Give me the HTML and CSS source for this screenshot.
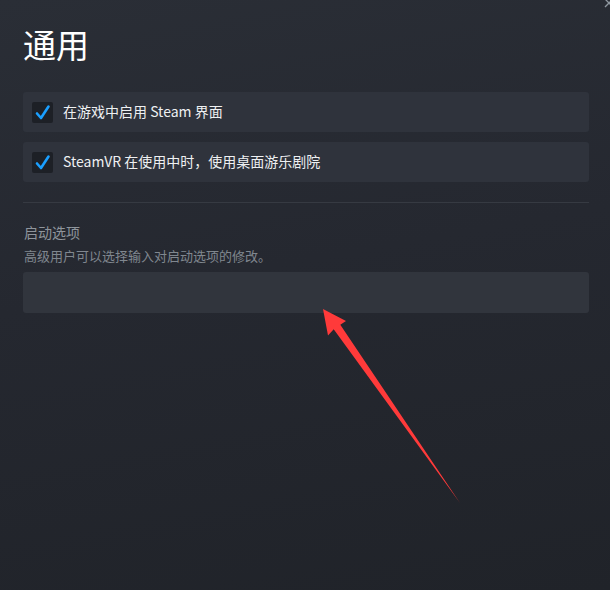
FILE: index.html
```html
<!DOCTYPE html>
<html lang="zh-CN">
<head>
<meta charset="utf-8">
<title>通用</title>
<link rel="stylesheet" href="styles.css">
</head>
<body>
<div class="page">
  <h1 class="title">通用</h1>
  <div class="row">
    <span class="check"><svg width="21" height="21" viewBox="0 0 21 21"><path d="M5 11.5 L9 16 L16.5 4.5" fill="none" stroke="#1a9fff" stroke-width="2.6" stroke-linecap="round" stroke-linejoin="round"/></svg></span>
    <span class="label">在游戏中启用 Steam 界面</span>
  </div>
  <div class="row">
    <span class="check"><svg width="21" height="21" viewBox="0 0 21 21"><path d="M5 11.5 L9 16 L16.5 4.5" fill="none" stroke="#1a9fff" stroke-width="2.6" stroke-linecap="round" stroke-linejoin="round"/></svg></span>
    <span class="label">SteamVR 在使用中时，使用桌面游乐剧院</span>
  </div>
  <div class="divider"></div>
  <div class="section-title">启动选项</div>
  <div class="section-desc">高级用户可以选择输入对启动选项的修改。</div>
  <div class="input"></div>
</div>
<svg class="close" width="10" height="10" viewBox="0 0 10 10"><path d="M1 1 L9 9 M9 1 L1 9" stroke="#8f98a0" stroke-width="1.3"/></svg>
<svg class="arrow" width="610" height="590" viewBox="0 0 610 590"><polygon points="323,309 346,321 340.3,324.7 460,503 333.7,329.3 328,335.5" fill="#ff3a3a"/></svg>
</body>
</html>
```
FILE: styles.css
```css
html, body {
  margin: 0;
  padding: 0;
}
body {
  width: 610px;
  height: 590px;
  overflow: hidden;
  background: linear-gradient(170deg, #2a2e36 0%, #252830 45%, #202329 100%);
  font-family: "Noto Sans CJK SC", "Noto Sans", sans-serif;
  position: relative;
}
.page {
  padding: 24px 21px 0 23px;
  display: flex;
  flex-direction: column;
}
.title {
  margin: 0;
  font-size: 33px;
  line-height: 40px;
  font-weight: 400;
  color: #ffffff;
  margin-left: 0;
}
.row {
  margin-top: 28px;
  height: 40px;
  background: #2f333c;
  border-radius: 3px;
  display: flex;
  align-items: center;
  padding-left: 9px;
}
.row + .row {
  margin-top: 10px;
}
.check {
  width: 21px;
  height: 21px;
  background: #1d2026;
  border-radius: 2px;
  display: flex;
}
.label {
  margin-left: 10px;
  font-size: 14px;
  line-height: 18px;
  margin-top: -2px;
  color: #eef0f2;
}
.divider {
  margin-top: 20px;
  height: 1px;
  background: #363a42;
}
.section-title {
  margin-top: 19px;
  font-size: 14px;
  line-height: 20px;
  color: #8f959c;
  margin-left: 1px;
}
.section-desc {
  margin-top: 5px;
  font-size: 13px;
  line-height: 18px;
  color: #80878f;
  margin-left: 1px;
}
.input {
  margin-top: 7px;
  height: 41px;
  background: #31353d;
  border-radius: 3px;
}
.close {
  position: absolute;
  top: -2px;
  right: -4px;
}
.arrow {
  position: absolute;
  left: 0;
  top: 0;
}
```
